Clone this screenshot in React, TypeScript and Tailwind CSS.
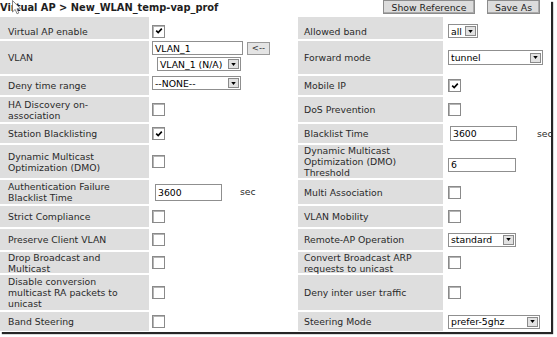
import React from "react";

const F = { fontFamily: '"DejaVu Sans", Verdana, sans-serif' };

function Check({ on }: { on?: boolean }) {
  return (
    <div className="w-[13px] h-[13px] border border-[#8a8a8a] bg-white shadow-[inset_1px_1px_0_#b5b5b5] relative shrink-0">
      {on && (
        <svg viewBox="0 0 10 10" className="absolute left-[1.5px] top-[1.5px] w-[8px] h-[8px]">
          <path d="M1.5 4.5 L4 7 L8.5 2" stroke="#000" strokeWidth="2" fill="none" />
        </svg>
      )}
    </div>
  );
}

function Sel({ text, w, h = 14 }: { text: string; w: number; h?: number }) {
  return (
    <div
      className="flex items-center border border-[#8f8f8f] bg-white shrink-0"
      style={{ width: w, height: h }}
    >
      <span className="flex-1 pl-[2px] text-black leading-[11px] whitespace-nowrap overflow-hidden">{text}</span>
      <div className="w-[11px] h-[10px] mr-[1px] border border-[#8a8a8a] bg-[#e2e2e2] flex items-center justify-center">
        <svg viewBox="0 0 6 4" className="w-[5px] h-[3px]">
          <path d="M0 0 H6 L3 4 Z" fill="#000" />
        </svg>
      </div>
    </div>
  );
}

function Inp({ text, w, h = 15 }: { text: string; w: number; h?: number }) {
  return (
    <div
      className="border border-[#8f8f8f] bg-white pl-[2px] flex items-center text-black leading-[11px] shrink-0"
      style={{ width: w, height: h }}
    >
      {text}
    </div>
  );
}

function L({ children, right }: { children: React.ReactNode; right?: boolean }) {
  return (
    <div className={`bg-[#dedede] flex items-center leading-[11px] text-[#2a2a2a] ${right ? "pl-[6px]" : "pl-[8px]"}`}>
      <div>{children}</div>
    </div>
  );
}

function V({ children, right, cls = "" }: { children?: React.ReactNode; right?: boolean; cls?: string }) {
  return (
    <div className={`bg-white flex items-center ${right ? "pl-[3px]" : "pl-[1px]"} ${cls}`}>{children}</div>
  );
}

export default function App() {
  return (
    <div className="w-[557px] h-[337px] bg-white relative overflow-hidden text-[9.3px]" style={F}>
      <div className="w-[551px] h-[332px] bg-white shadow-[2px_2px_1px_rgba(0,0,0,0.85)] flex flex-col">
        <div className="h-[17px] flex items-start">
          <div className="font-bold text-[9.85px] text-[#1e1e1e] pt-[2px] leading-[11px]">
            Virtual AP &gt; New_WLAN_temp-vap_prof
          </div>
          <div className="ml-auto flex gap-[12px] mr-[11px]">
            <div className="w-[92px] h-[14px] bg-[#dcdcdc] border border-[#8c8c8c] shadow-[inset_-1px_-1px_0_#aaa] flex items-center justify-center text-[#222] leading-[11px]">
              Show Reference
            </div>
            <div className="w-[53px] h-[14px] bg-[#dcdcdc] border border-[#8c8c8c] shadow-[inset_-1px_-1px_0_#aaa] flex items-center justify-center text-[#222] leading-[11px]">
              Save As
            </div>
          </div>
        </div>
        <div className="grid grid-cols-[149px_145px_145px_106px] gap-[2px] grid-rows-[22px_33px_19px_25px_19px_33px_24px_21px_21px_21px_35px_19px]">
          {/* r1 */}
          <L>
            <div className="pt-[6px]">Virtual AP enable</div>
          </L>
          <V cls="pt-[6px]">
            <Check on />
          </V>
          <L right>
            <div className="pt-[6px]">Allowed band</div>
          </L>
          <V right cls="pt-[6px]">
            <Sel text="all" w={30} />
          </V>
          {/* r2 */}
          <L>VLAN</L>
          <div className="bg-white flex flex-col pl-[1px] pt-[0px] gap-[2px]">
            <div className="flex items-center gap-[4px]">
              <Inp text="VLAN_1" w={91} h={14} />
              <div className="w-[23px] h-[13px] bg-[#e4e4e4] border border-[#9a9a9a] flex items-center justify-center text-[8.5px] leading-[8px] text-[#333]">
                &lt;--
              </div>
            </div>
            <div className="pl-[5px]">
              <Sel text="VLAN_1 (N/A)" w={84} h={14} />
            </div>
          </div>
          <L right>Forward mode</L>
          <V right>
            <Sel text="tunnel" w={95} h={15} />
          </V>
          {/* r3 */}
          <L>Deny time range</L>
          <V cls="items-start">
            <Sel text="--NONE--" w={89} h={14} />
          </V>
          <L right>Mobile IP</L>
          <V right>
            <Check on />
          </V>
          {/* r4 */}
          <L>
            HA Discovery on-
            <br />
            association
          </L>
          <V>
            <Check />
          </V>
          <L right>DoS Prevention</L>
          <V right>
            <Check />
          </V>
          {/* r5 */}
          <L>Station Blacklisting</L>
          <V>
            <Check on />
          </V>
          <L right>Blacklist Time</L>
          <div className="bg-white flex items-center pl-[5px] overflow-hidden">
            <Inp text="3600" w={67} />
            <span className="ml-[20px] text-[#2a2a2a] whitespace-nowrap">sec</span>
          </div>
          {/* r6 */}
          <L>
            Dynamic Multicast
            <br />
            Optimization (DMO)
          </L>
          <V>
            <Check />
          </V>
          <L right>
            Dynamic Multicast
            <br />
            Optimization (DMO)
            <br />
            Threshold
          </L>
          <V right cls="pt-[6px]">
            <Inp text="6" w={68} h={14} />
          </V>
          {/* r7 */}
          <L>
            Authentication Failure
            <br />
            Blacklist Time
          </L>
          <div className="bg-white flex items-center pl-[4px]">
            <Inp text="3600" w={67} h={17} />
            <span className="ml-[18px] text-[#2a2a2a]">sec</span>
          </div>
          <L right>Multi Association</L>
          <V right>
            <Check />
          </V>
          {/* r8 */}
          <L>Strict Compliance</L>
          <V>
            <Check />
          </V>
          <L right>VLAN Mobility</L>
          <V right>
            <Check />
          </V>
          {/* r9 */}
          <L>Preserve Client VLAN</L>
          <V>
            <Check />
          </V>
          <L right>Remote-AP Operation</L>
          <V right>
            <Sel text="standard" w={68} h={14} />
          </V>
          {/* r10 */}
          <L>
            Drop Broadcast and
            <br />
            Multicast
          </L>
          <V>
            <Check />
          </V>
          <L right>
            Convert Broadcast ARP
            <br />
            requests to unicast
          </L>
          <V right>
            <Check />
          </V>
          {/* r11 */}
          <L>
            Disable conversion
            <br />
            multicast RA packets to
            <br />
            unicast
          </L>
          <V>
            <Check />
          </V>
          <L right>Deny inter user traffic</L>
          <V right>
            <Check />
          </V>
          {/* r12 */}
          <L>Band Steering</L>
          <V>
            <Check />
          </V>
          <L right>Steering Mode</L>
          <V right>
            <Sel text="prefer-5ghz" w={92} h={14} />
          </V>
        </div>
      </div>
      {/* mouse cursor overlay */}
      <svg className="absolute left-[12px] top-[0px] w-[10px] h-[15px]" viewBox="0 0 10 15">
        <path d="M0.5 0.5 V12 L3.2 9.4 L5 13.8 L6.8 13 L5 8.8 H8.6 Z" fill="#fff" stroke="#666" strokeWidth="0.8" />
      </svg>
    </div>
  );
}
